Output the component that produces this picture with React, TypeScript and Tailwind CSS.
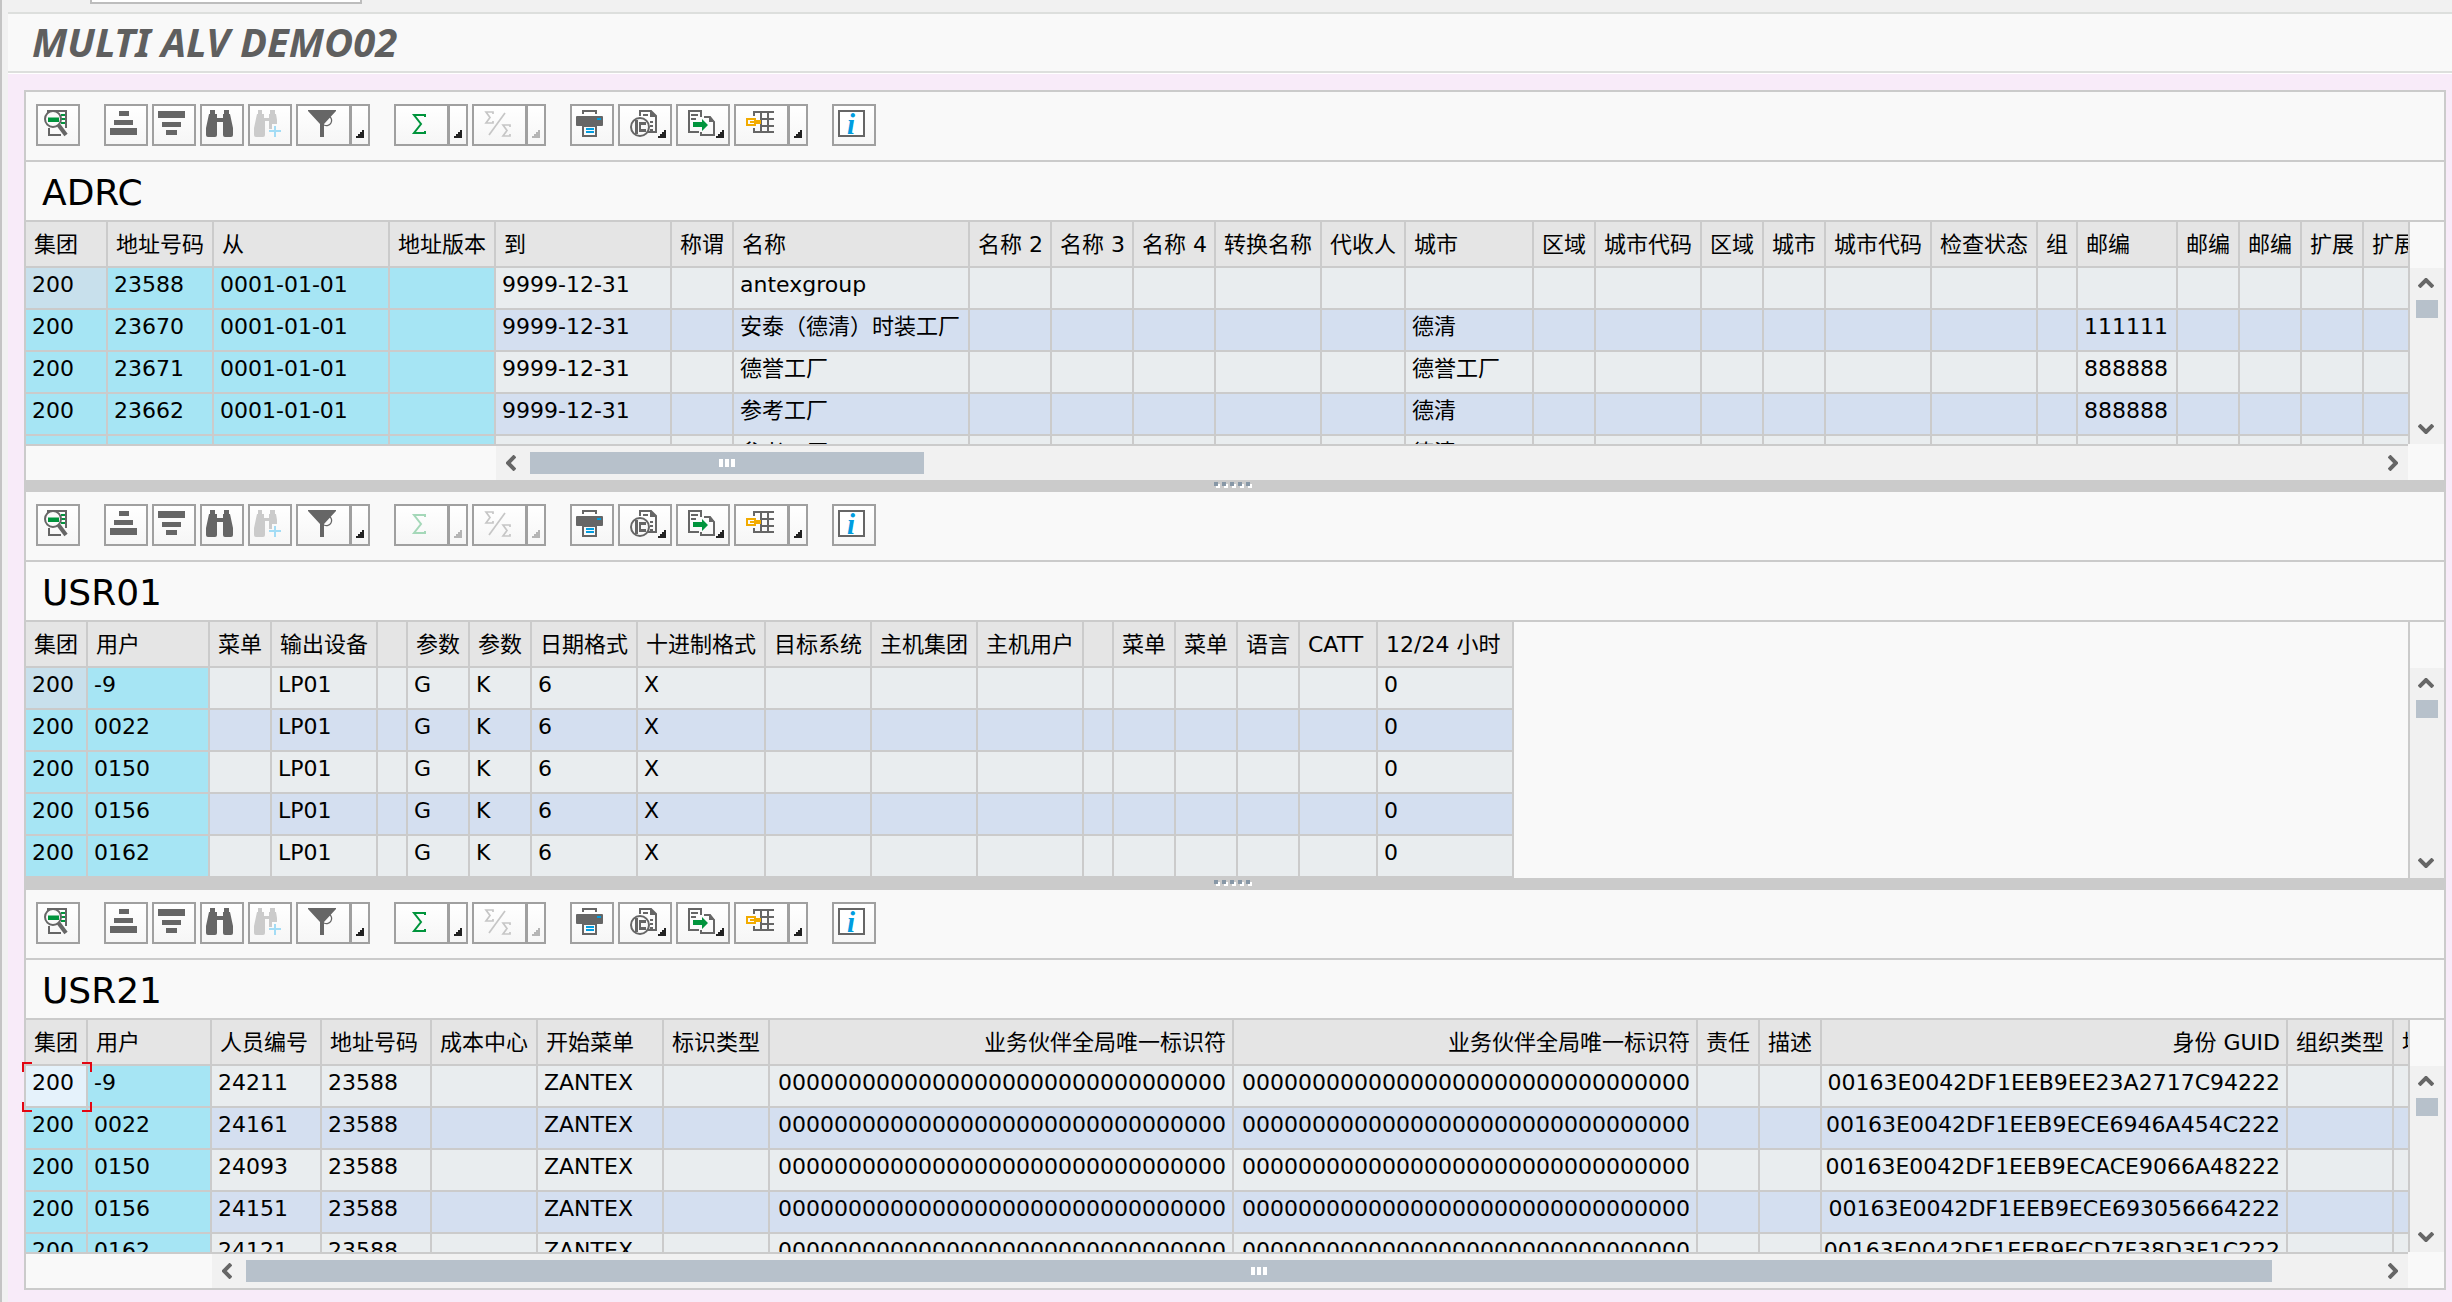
import React from "react";

type Column = { title: string; width: string; right?: boolean };
type GridData = {
  name: string;
  frozen: number;
  columns: Column[];
  rows: Record<number, string>[];
};

const zeros = "0".repeat(32);

const adrc: GridData = {
  name: "ADRC",
  frozen: 4,
  columns: [
    { title: "集团", width: "w-[82px]" },
    { title: "地址号码", width: "w-[106px]" },
    { title: "从", width: "w-[176px]" },
    { title: "地址版本", width: "w-[106px]" },
    { title: "到", width: "w-[176px]" },
    { title: "称谓", width: "w-[62px]" },
    { title: "名称", width: "w-[236px]" },
    { title: "名称 2", width: "w-[82px]" },
    { title: "名称 3", width: "w-[82px]" },
    { title: "名称 4", width: "w-[82px]" },
    { title: "转换名称", width: "w-[106px]" },
    { title: "代收人", width: "w-[84px]" },
    { title: "城市", width: "w-[128px]" },
    { title: "区域", width: "w-[62px]" },
    { title: "城市代码", width: "w-[106px]" },
    { title: "区域", width: "w-[62px]" },
    { title: "城市", width: "w-[62px]" },
    { title: "城市代码", width: "w-[106px]" },
    { title: "检查状态", width: "w-[106px]" },
    { title: "组", width: "w-[40px]" },
    { title: "邮编", width: "w-[100px]" },
    { title: "邮编", width: "w-[62px]" },
    { title: "邮编", width: "w-[62px]" },
    { title: "扩展", width: "w-[62px]" },
    { title: "扩展", width: "w-[62px]" },
  ],
  rows: [
    { 0: "200", 1: "23588", 2: "0001-01-01", 4: "9999-12-31", 6: "antexgroup" },
    { 0: "200", 1: "23670", 2: "0001-01-01", 4: "9999-12-31", 6: "安泰（德清）时装工厂", 12: "德清", 20: "111111" },
    { 0: "200", 1: "23671", 2: "0001-01-01", 4: "9999-12-31", 6: "德誉工厂", 12: "德誉工厂", 20: "888888" },
    { 0: "200", 1: "23662", 2: "0001-01-01", 4: "9999-12-31", 6: "参考工厂", 12: "德清", 20: "888888" },
    { 0: "200", 1: "23663", 2: "0001-01-01", 4: "9999-12-31", 6: "参考工厂", 12: "德清", 20: "888888" },
  ],
};

const usr01: GridData = {
  name: "USR01",
  frozen: 2,
  columns: [
    { title: "集团", width: "w-[62px]" },
    { title: "用户", width: "w-[122px]" },
    { title: "菜单", width: "w-[62px]" },
    { title: "输出设备", width: "w-[106px]" },
    { title: "", width: "w-[30px]" },
    { title: "参数", width: "w-[62px]" },
    { title: "参数", width: "w-[62px]" },
    { title: "日期格式", width: "w-[106px]" },
    { title: "十进制格式", width: "w-[128px]" },
    { title: "目标系统", width: "w-[106px]" },
    { title: "主机集团", width: "w-[106px]" },
    { title: "主机用户", width: "w-[106px]" },
    { title: "", width: "w-[30px]" },
    { title: "菜单", width: "w-[62px]" },
    { title: "菜单", width: "w-[62px]" },
    { title: "语言", width: "w-[62px]" },
    { title: "CATT", width: "w-[78px]" },
    { title: "12/24 小时", width: "w-[136px]" },
  ],
  rows: ["-9", "0022", "0150", "0156", "0162"].map((user) => ({
    0: "200", 1: user, 3: "LP01", 5: "G", 6: "K", 7: "6", 8: "X", 17: "0",
  })),
};

const usr21: GridData = {
  name: "USR21",
  frozen: 2,
  columns: [
    { title: "集团", width: "w-[62px]" },
    { title: "用户", width: "w-[124px]" },
    { title: "人员编号", width: "w-[110px]" },
    { title: "地址号码", width: "w-[110px]" },
    { title: "成本中心", width: "w-[106px]" },
    { title: "开始菜单", width: "w-[126px]" },
    { title: "标识类型", width: "w-[106px]" },
    { title: "业务伙伴全局唯一标识符", width: "w-[464px]", right: true },
    { title: "业务伙伴全局唯一标识符", width: "w-[464px]", right: true },
    { title: "责任", width: "w-[62px]" },
    { title: "描述", width: "w-[62px]" },
    { title: "身份 GUID", width: "w-[466px]", right: true },
    { title: "组织类型", width: "w-[106px]" },
    { title: "地址", width: "w-[62px]" },
  ],
  rows: [
    ["-9", "24211", "00163E0042DF1EEB9EE23A2717C94222"],
    ["0022", "24161", "00163E0042DF1EEB9ECE6946A454C222"],
    ["0150", "24093", "00163E0042DF1EEB9ECACE9066A48222"],
    ["0156", "24151", "00163E0042DF1EEB9ECE693056664222"],
    ["0162", "24121", "00163E0042DF1EEB9ECD7F38D3F1C222"],
  ].map(([user, person, guid]) => ({
    0: "200", 1: user, 2: person, 3: "23588", 5: "ZANTEX", 7: zeros, 8: zeros, 11: guid,
  })),
};

/* ---------- toolbar icons (drawn on a 44×42 button face) ---------- */

const G = "#666666";
const GREEN = "#00943c";
const BLUE = "#009de0";

function Face({ w = 40, children }: { w?: number; children: React.ReactNode }) {
  return (
    <svg aria-hidden="true" width={w} height={38} viewBox={`2 2 ${w} 38`} className="block shrink-0">
      {children}
    </svg>
  );
}

const Corner = ({ x, off }: { x: number; off?: boolean }) => (
  <path
    d={`M${x} 34h8v-8h-2v2h-2v2h-2v2h-2z`}
    fill={off ? "#b5b5b5" : "#222222"}
  />
);

const DetailsIcon = () => (
  <Face>
    <path d="M12 9V7h18v17M13 24v7h12" fill="none" stroke={G} strokeWidth="2" />
    <path d="M25 10h4v2h-4zM25 14h4v2h-4zM25 18h4v2h-4z" fill={GREEN} />
    <circle cx="17" cy="15" r="8" fill="#fafafa" stroke={G} strokeWidth="2" />
    <path d="M12 13.500h11v4.500H12z" fill={GREEN} />
    <path d="M22.500 21l7.500 10" stroke={G} strokeWidth="4" />
  </Face>
);

const SortAscIcon = () => (
  <Face>
    <path d="M15 7h10v5H15zM10 16h19v5H10zM6 24h27v7H6z" fill={G} />
  </Face>
);

const SortDescIcon = () => (
  <Face>
    <path d="M6 7h27v7H6zM10 18h19v5H10zM14 26h11v5H14z" fill={G} />
  </Face>
);

const FindIcon = () => (
  <Face>
    <path
      d="M10 6h5v4h2v4h6v-4h1V6h5v4h1l3 14v7q0 2-2 2h-6q-2 0-2-2V18h-6v13q0 2-2 2H8q-2 0-2-2v-7l3-14h1z"
      fill={G}
    />
  </Face>
);

const FindNextIcon = () => (
  <Face>
    <path
      d="M10 6h4v4h2v4h5v-4h1V6h5v4h1l1 6v4h-5v5h-3v-8h-4v14q0 2-2 2H8q-2 0-2-2v-7l3-14h1z"
      fill="#cbcbcb"
    />
    <path d="M27 22v11M21 27h12" stroke="#a3dcf5" strokeWidth="2" />
  </Face>
);

const FilterIcon = () => (
  <Face w={51}>
    <path d="M12 6h28v1L28 20v13h-4V20L12 7z" fill={G} />
    <path d="M33 12a5 5 0 1 1-5 9" fill="none" stroke={G} strokeWidth="1.300" />
  </Face>
);

const SumIcon = ({ off }: { off?: boolean }) => (
  <Face w={51}>
    <path
      d="M31 13v-2H20l7 9-7 9h11v-2"
      fill="none"
      stroke={off ? "#a5d8b9" : GREEN}
      strokeWidth="2"
    />
  </Face>
);

const SubtotalIcon = () => (
  <Face w={51}>
    <g fill="none" stroke="#c6c6c6" strokeWidth="1.700">
      <path d="M21 10V8h-7l4 5.500-4 5.500h7v-2" />
      <path d="M38 23v-2h-7l4 5.500-4 5.500h7v-2" />
      <path d="M33 9L17 31" />
    </g>
  </Face>
);

const PrintIcon = () => (
  <Face>
    <path d="M13 10V7h13v3" fill="none" stroke={G} strokeWidth="2" />
    <rect x="6" y="12" width="27" height="10" rx="1" fill={G} />
    <rect x="13" y="22" width="13" height="10" fill="#fafafa" stroke={G} strokeWidth="2" />
    <path d="M27 14h4v2h-4zM16 24h8v2h-8zM16 27h8v2h-8z" fill={BLUE} />
  </Face>
);

const ViewsIcon = () => (
  <Face w={50}>
    <path d="M22 12V7h11l5 5v16h-8" fill="none" stroke={G} strokeWidth="2" />
    <path d="M32 6l7 7h-7zM25 10h5v2h-5zM32 17h3v2h-3zM32 21h3v2h-3zM32 25h3v2h-3z" fill={G} />
    <circle cx="22" cy="23" r="9" fill="#fafafa" stroke={G} strokeWidth="2" />
    <path d="M17 16h3v14h-3zM21 18h7v3h-7zM21 25h7v3h-7zM21 21h2v4h-2z" fill={G} />
    <Corner x={40} />
  </Face>
);

const ExportIcon = () => (
  <Face w={50}>
    <path d="M25 13V7H13v21h10" fill="none" stroke={G} strokeWidth="2" />
    <path d="M15 10h7v2h-7zM15 14h5v2h-5z" fill={G} />
    <path d="M28 13h6l4 5v13H25v-3" fill="none" stroke={G} strokeWidth="2" />
    <path d="M33 12l6 6h-6z" fill={G} />
    <path d="M17 18h9v-3l6 6-6 6v-4h-9z" fill={GREEN} />
    <Corner x={40} />
  </Face>
);

const LayoutIcon = () => (
  <Face w={51}>
    <path
      d="M19 8h21M27 15h13M27 22h13M19 28h21M27 8v20M34 8v20M20 8v4M20 24v4"
      fill="none"
      stroke={G}
      strokeWidth="2"
    />
    <path d="M12 14h10v2h5v4h-5v2H12z" fill="#f2ab00" />
    <path d="M14 16h6v4h-6z" fill="#fafafa" />
    <path d="M16 17h4v2h-4z" fill="#f2ab00" />
  </Face>
);

const InfoIcon = () => (
  <Face>
    <rect x="7" y="7" width="25" height="25" fill="#ffffff" stroke={G} strokeWidth="2" />
    <text
      x="19"
      y="30"
      textAnchor="middle"
      fill={BLUE}
      className="font-['Liberation_Serif',serif] text-[29px] font-bold italic"
    >
      i
    </text>
  </Face>
);

/* ---------- toolbar ---------- */

const face =
  "block h-[42px] shrink-0 border-2 border-[#a0a0a0] bg-linear-to-b from-white to-[#f6f6f6] overflow-hidden";

function ToolButton({ label, children, wide }: { label: string; children: React.ReactNode; wide?: boolean }) {
  return (
    <button type="button" aria-label={label} className={`${face} ${wide ? "w-[54px]" : "w-11"}`}>
      {children}
    </button>
  );
}

function SplitButton({ label, off, children }: { label: string; off?: boolean; children: React.ReactNode }) {
  return (
    <div className="flex">
      <button type="button" aria-label={label} disabled={off} className={`${face} w-[55px]`}>
        {children}
      </button>
      <button type="button" aria-label={`${label} 选项`} disabled={off} className={`${face} w-[19px] border-l`}>
        <Face w={16}>
          <Corner x={6} off={off} />
        </Face>
      </button>
    </div>
  );
}

function Toolbar({ sumOff }: { sumOff?: boolean }) {
  return (
    <div role="toolbar" className="flex h-[70px] shrink-0 items-start gap-6 border-b-2 border-[#cbcbcb] px-2.5 pt-3">
      <ToolButton label="细节"><DetailsIcon /></ToolButton>
      <div className="flex gap-1">
        <ToolButton label="升序排序"><SortAscIcon /></ToolButton>
        <ToolButton label="降序排序"><SortDescIcon /></ToolButton>
        <ToolButton label="查找"><FindIcon /></ToolButton>
        <ToolButton label="查找下一个"><FindNextIcon /></ToolButton>
        <SplitButton label="过滤器"><FilterIcon /></SplitButton>
      </div>
      <div className="flex gap-1">
        <SplitButton label="总计" off={sumOff}><SumIcon off={sumOff} /></SplitButton>
        <SplitButton label="小计" off><SubtotalIcon /></SplitButton>
      </div>
      <div className="flex gap-1">
        <ToolButton label="打印"><PrintIcon /></ToolButton>
        <ToolButton label="视图" wide><ViewsIcon /></ToolButton>
        <ToolButton label="导出" wide><ExportIcon /></ToolButton>
        <SplitButton label="布局"><LayoutIcon /></SplitButton>
      </div>
      <ToolButton label="信息"><InfoIcon /></ToolButton>
    </div>
  );
}

/* ---------- scroll bars ---------- */

function Chevron({ d, w, h }: { d: string; w: number; h: number }) {
  return (
    <svg aria-hidden="true" width={w} height={h} viewBox={`0 0 ${w} ${h}`} className="block">
      <path d={d} fill="none" stroke="#666666" strokeWidth="4" />
    </svg>
  );
}

function VerticalBar() {
  return (
    <div className="flex w-9 shrink-0 flex-col border-l-2 border-[#cbcbcb]">
      <div className="h-[46px] shrink-0" />
      <div className="flex flex-1 flex-col justify-between bg-[#f1f1f1] py-2.5 pl-1.5">
        <div className="flex flex-col gap-3">
          <button type="button" aria-label="向上滚动" className="ml-0.5 w-4">
            <Chevron w={16} h={10} d="M1 9l7-7 7 7" />
          </button>
          <div className="h-[18px] w-[22px] bg-[#b7c1cb]" />
        </div>
        <button type="button" aria-label="向下滚动" className="ml-0.5 w-4">
          <Chevron w={16} h={10} d="M1 1l7 7 7-7" />
        </button>
      </div>
    </div>
  );
}

function HorizontalBar({ offset, thumb }: { offset: string; thumb: string }) {
  return (
    <div className="flex h-9 shrink-0">
      <div className="flex min-w-0 flex-1 border-t-2 border-[#cbcbcb]">
        <div className={`shrink-0 ${offset}`} />
        <div className="flex min-w-0 flex-1 items-center bg-[#f1f1f1] px-2.5">
          <button type="button" aria-label="向左滚动" className="w-2.5 shrink-0">
            <Chevron w={10} h={16} d="M9 1L2 8l7 7" />
          </button>
          <div className="mx-3.5 flex min-w-0 flex-1">
            <div className={`flex h-[22px] items-center justify-center gap-0.5 bg-[#b7c1cb] ${thumb}`}>
              <span className="h-2 w-1 bg-white" />
              <span className="h-2 w-1 bg-white" />
              <span className="h-2 w-1 bg-white" />
            </div>
          </div>
          <button type="button" aria-label="向右滚动" className="w-2.5 shrink-0">
            <Chevron w={10} h={16} d="M1 1l7 7-7 7" />
          </button>
        </div>
      </div>
      <div className="w-9 shrink-0" />
    </div>
  );
}

/* ---------- grid ---------- */

function Grid({ data, selected }: { data: GridData; selected?: boolean }) {
  const background = (row: number, col: number) => {
    if (row === 0 && col === 0) return selected ? "bg-[#e5f2fb]" : "bg-[#c8e0ec]";
    if (col < data.frozen) return "bg-[#a6e5f4]";
    return row % 2 ? "bg-[#d4dff0]" : "bg-[#e9edef]";
  };
  return (
    <table aria-label={data.name} className="w-px table-fixed border-separate border-spacing-0 text-[22px] text-black">
      <colgroup>
        {data.columns.map((c, i) => (
          <col key={i} className={c.width} />
        ))}
      </colgroup>
      <thead>
        <tr>
          {data.columns.map((c, i) => (
            <th
              key={i}
              scope="col"
              className={`h-[46px] overflow-hidden border-r-2 border-b-2 border-[#cbcbcb] bg-[#e5e5e5] pt-0.5 pb-0 leading-[42px] font-normal whitespace-nowrap ${
                c.right ? "pr-1.5 pl-0 text-right" : "pr-0 pl-2 text-left"
              }`}
            >
              {c.title}
            </th>
          ))}
        </tr>
      </thead>
      <tbody>
        {data.rows.map((row, r) => (
          <tr key={r}>
            {data.columns.map((c, i) => (
              <td
                key={i}
                className={`h-[42px] overflow-hidden border-r-2 border-b-2 border-[#cbcbcb] py-0 align-top leading-[34px] whitespace-nowrap ${
                  c.right ? "pr-1.5 pl-0 text-right" : "pr-0 pl-1.5"
                } ${background(r, i)}`}
              >
                {row[i] ?? ""}
              </td>
            ))}
          </tr>
        ))}
      </tbody>
    </table>
  );
}

function CellCursor() {
  return (
    <div aria-hidden="true" className="pointer-events-none absolute top-[42px] -left-1 h-[50px] w-[70px]">
      <span className="absolute top-0 left-0 size-2.5 border-t-2 border-l-2 border-[#e30613]" />
      <span className="absolute top-0 right-0 size-2.5 border-t-2 border-r-2 border-[#e30613]" />
      <span className="absolute bottom-0 left-0 size-2.5 border-b-2 border-l-2 border-[#e30613]" />
      <span className="absolute right-0 bottom-0 size-2.5 border-r-2 border-b-2 border-[#e30613]" />
    </div>
  );
}

function Panel({
  data,
  size,
  sumOff,
  selected,
  bar,
}: {
  data: GridData;
  size: string;
  sumOff?: boolean;
  selected?: boolean;
  bar?: { offset: string; thumb: string };
}) {
  return (
    <section className={`flex min-h-0 flex-col ${selected ? "flex-1" : "shrink-0"}`}>
      <Toolbar sumOff={sumOff} />
      <h2 className="h-[60px] shrink-0 border-b-2 border-[#cbcbcb] pt-1 pl-4 text-[36px] leading-[54px] text-black">
        {data.name}
      </h2>
      <div className={`relative flex ${size}`}>
        <div className="min-w-0 flex-1 overflow-hidden">
          <Grid data={data} selected={selected} />
        </div>
        <VerticalBar />
        {selected && <CellCursor />}
      </div>
      {bar && <HorizontalBar {...bar} />}
    </section>
  );
}

function Splitter() {
  return (
    <div role="separator" className="flex h-3 shrink-0 justify-center gap-1 bg-[#cbcbcb] pt-0.5 pr-1.5">
      {[0, 1, 2, 3, 4].map((i) => (
        <span key={i} className="size-1 bg-[#8797a6] shadow-[2px_2px_0_#ffffff]" />
      ))}
    </div>
  );
}

export default function App() {
  return (
    <div className="flex h-screen min-h-[1200px] flex-col overflow-hidden border-l-2 border-[#c4c4c4] bg-[#f1f1f1] pl-1.5 font-['DejaVu_Sans','Noto_Sans_CJK_SC',sans-serif]">
      <div className="h-3 shrink-0 overflow-hidden pl-[82px]">
        <input
          aria-label="命令"
          className="-mt-6 block h-7 w-[272px] border-2 border-[#bdbdbd] bg-white outline-none"
        />
      </div>
      <header className="h-[61px] shrink-0 border-y-2 border-[#dddfdd] bg-[#f9f9f9] pl-6">
        <h1 className="font-['Noto_Sans',sans-serif] text-[40px] leading-[56px] font-bold text-[#5f5f5f] italic">
          MULTI ALV DEMO02
        </h1>
      </header>
      <main className="flex min-h-0 flex-1 flex-col border-t border-white bg-[#f8ebf9] pt-4 pr-1.5 pb-3 pl-4">
        <div className="flex min-h-0 flex-1 flex-col border-2 border-[#cbcbcb] bg-[#f9f9f9]">
          <Panel data={adrc} size="h-[222px]" bar={{ offset: "w-[470px]", thumb: "w-[394px]" }} />
          <Splitter />
          <Panel data={usr01} size="h-[256px]" sumOff />
          <Splitter />
          <Panel
            data={usr21}
            size="min-h-0 flex-1"
            selected
            bar={{ offset: "w-[186px]", thumb: "mr-[102px] flex-1" }}
          />
        </div>
      </main>
    </div>
  );
}
